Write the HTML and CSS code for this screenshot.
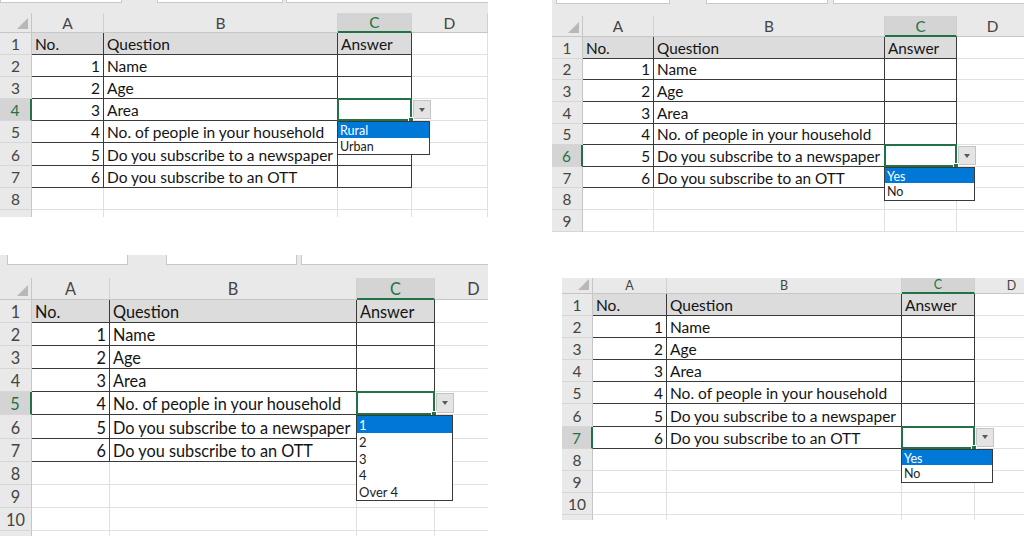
FILE: index.html
```html
<!DOCTYPE html>
<html lang="en">
<head>
    <meta charset="UTF-8">
    <meta name="viewport" content="width=device-width, initial-scale=1.0">
    <title>Survey sheet with data validation lists</title>
    <link rel="stylesheet" href="styles.css">
</head>
<body>
<div class="page">

    <!-- Area: Rural / Urban -->
    <div class="sheet s1">
        <div class="tabs"><span class="tab"></span><span class="tab"></span><span class="tab"></span></div>
        <div class="grid">
            <div class="row"><span class="corner"></span><span class="ch">A</span><span class="ch">B</span><span class="ch on">C</span><span class="ch">D</span></div>
            <div class="row"><span class="rh">1</span><span class="cell t hd">No.</span><span class="cell t hd">Question</span><span class="cell t hd">Answer</span><span class="cell"></span></div>
            <div class="row"><span class="rh">2</span><span class="cell t num">1</span><span class="cell t">Name</span><span class="cell t"></span><span class="cell"></span></div>
            <div class="row"><span class="rh">3</span><span class="cell t num">2</span><span class="cell t">Age</span><span class="cell t"></span><span class="cell"></span></div>
            <div class="row"><span class="rh on">4</span><span class="cell t num">3</span><span class="cell t">Area</span><span class="cell t sel"><span class="arrow"></span><ul class="drop"><li class="hi">Rural</li><li>Urban</li></ul></span><span class="cell"></span></div>
            <div class="row"><span class="rh">5</span><span class="cell t num">4</span><span class="cell t">No. of people in your household</span><span class="cell t"></span><span class="cell"></span></div>
            <div class="row"><span class="rh">6</span><span class="cell t num">5</span><span class="cell t">Do you subscribe to a newspaper</span><span class="cell t"></span><span class="cell"></span></div>
            <div class="row"><span class="rh">7</span><span class="cell t num">6</span><span class="cell t">Do you subscribe to an OTT</span><span class="cell t"></span><span class="cell"></span></div>
            <div class="row"><span class="rh">8</span><span class="cell"></span><span class="cell"></span><span class="cell"></span><span class="cell"></span></div>
            <div class="row"><span class="rh"></span><span class="cell"></span><span class="cell"></span><span class="cell"></span><span class="cell"></span></div>
        </div>
    </div>

    <!-- Newspaper: Yes / No -->
    <div class="sheet s2">
        <div class="tabs"><span class="tab"></span><span class="tab"></span><span class="tab"></span></div>
        <div class="grid">
            <div class="row"><span class="corner"></span><span class="ch">A</span><span class="ch">B</span><span class="ch on">C</span><span class="ch">D</span></div>
            <div class="row"><span class="rh">1</span><span class="cell t hd">No.</span><span class="cell t hd">Question</span><span class="cell t hd">Answer</span><span class="cell"></span></div>
            <div class="row"><span class="rh">2</span><span class="cell t num">1</span><span class="cell t">Name</span><span class="cell t"></span><span class="cell"></span></div>
            <div class="row"><span class="rh">3</span><span class="cell t num">2</span><span class="cell t">Age</span><span class="cell t"></span><span class="cell"></span></div>
            <div class="row"><span class="rh">4</span><span class="cell t num">3</span><span class="cell t">Area</span><span class="cell t"></span><span class="cell"></span></div>
            <div class="row"><span class="rh">5</span><span class="cell t num">4</span><span class="cell t">No. of people in your household</span><span class="cell t"></span><span class="cell"></span></div>
            <div class="row"><span class="rh on">6</span><span class="cell t num">5</span><span class="cell t">Do you subscribe to a newspaper</span><span class="cell t sel"><span class="arrow"></span><ul class="drop"><li class="hi">Yes</li><li>No</li></ul></span><span class="cell"></span></div>
            <div class="row"><span class="rh">7</span><span class="cell t num">6</span><span class="cell t">Do you subscribe to an OTT</span><span class="cell t"></span><span class="cell"></span></div>
            <div class="row"><span class="rh">8</span><span class="cell"></span><span class="cell"></span><span class="cell"></span><span class="cell"></span></div>
            <div class="row"><span class="rh">9</span><span class="cell"></span><span class="cell"></span><span class="cell"></span><span class="cell"></span></div>
        </div>
    </div>

    <!-- Household size: 1 .. Over 4 -->
    <div class="sheet s3">
        <div class="tabs"><span class="tab"></span><span class="tab"></span><span class="tab"></span></div>
        <div class="grid">
            <div class="row"><span class="corner"></span><span class="ch">A</span><span class="ch">B</span><span class="ch on">C</span><span class="ch">D</span></div>
            <div class="row"><span class="rh">1</span><span class="cell t hd">No.</span><span class="cell t hd">Question</span><span class="cell t hd">Answer</span><span class="cell"></span></div>
            <div class="row"><span class="rh">2</span><span class="cell t num">1</span><span class="cell t">Name</span><span class="cell t"></span><span class="cell"></span></div>
            <div class="row"><span class="rh">3</span><span class="cell t num">2</span><span class="cell t">Age</span><span class="cell t"></span><span class="cell"></span></div>
            <div class="row"><span class="rh">4</span><span class="cell t num">3</span><span class="cell t">Area</span><span class="cell t"></span><span class="cell"></span></div>
            <div class="row"><span class="rh on">5</span><span class="cell t num">4</span><span class="cell t">No. of people in your household</span><span class="cell t sel"><span class="arrow"></span><ul class="drop"><li class="hi">1</li><li>2</li><li>3</li><li>4</li><li>Over 4</li></ul></span><span class="cell"></span></div>
            <div class="row"><span class="rh">6</span><span class="cell t num">5</span><span class="cell t">Do you subscribe to a newspaper</span><span class="cell t"></span><span class="cell"></span></div>
            <div class="row"><span class="rh">7</span><span class="cell t num">6</span><span class="cell t">Do you subscribe to an OTT</span><span class="cell t"></span><span class="cell"></span></div>
            <div class="row"><span class="rh">8</span><span class="cell"></span><span class="cell"></span><span class="cell"></span><span class="cell"></span></div>
            <div class="row"><span class="rh">9</span><span class="cell"></span><span class="cell"></span><span class="cell"></span><span class="cell"></span></div>
            <div class="row"><span class="rh">10</span><span class="cell"></span><span class="cell"></span><span class="cell"></span><span class="cell"></span></div>
            <div class="row"><span class="rh"></span><span class="cell"></span><span class="cell"></span><span class="cell"></span><span class="cell"></span></div>
        </div>
    </div>

    <!-- OTT: Yes / No -->
    <div class="sheet s4">
        <div class="grid">
            <div class="row"><span class="corner"></span><span class="ch">A</span><span class="ch">B</span><span class="ch on">C</span><span class="ch">D</span></div>
            <div class="row"><span class="rh">1</span><span class="cell t hd">No.</span><span class="cell t hd">Question</span><span class="cell t hd">Answer</span><span class="cell"></span></div>
            <div class="row"><span class="rh">2</span><span class="cell t num">1</span><span class="cell t">Name</span><span class="cell t"></span><span class="cell"></span></div>
            <div class="row"><span class="rh">3</span><span class="cell t num">2</span><span class="cell t">Age</span><span class="cell t"></span><span class="cell"></span></div>
            <div class="row"><span class="rh">4</span><span class="cell t num">3</span><span class="cell t">Area</span><span class="cell t"></span><span class="cell"></span></div>
            <div class="row"><span class="rh">5</span><span class="cell t num">4</span><span class="cell t">No. of people in your household</span><span class="cell t"></span><span class="cell"></span></div>
            <div class="row"><span class="rh">6</span><span class="cell t num">5</span><span class="cell t">Do you subscribe to a newspaper</span><span class="cell t"></span><span class="cell"></span></div>
            <div class="row"><span class="rh on">7</span><span class="cell t num">6</span><span class="cell t">Do you subscribe to an OTT</span><span class="cell t sel"><span class="arrow"></span><ul class="drop"><li class="hi">Yes</li><li>No</li></ul></span><span class="cell"></span></div>
            <div class="row"><span class="rh">8</span><span class="cell"></span><span class="cell"></span><span class="cell"></span><span class="cell"></span></div>
            <div class="row"><span class="rh">9</span><span class="cell"></span><span class="cell"></span><span class="cell"></span><span class="cell"></span></div>
            <div class="row"><span class="rh">10</span><span class="cell"></span><span class="cell"></span><span class="cell"></span><span class="cell"></span></div>
            <div class="row"><span class="rh"></span><span class="cell"></span><span class="cell"></span><span class="cell"></span><span class="cell"></span></div>
        </div>
    </div>

</div>
</body>
</html>
```

FILE: styles.css
```css
/* page */
body {
    margin: 0;
    background: #fff;
    font-family: Lato, "Liberation Sans", sans-serif;
    color: #141414;
}

.page {
    position: relative;
    width: 1024px;
    height: 536px;
    overflow: hidden;
}

/* one screenshot of the sheet */
.sheet {
    position: absolute;
    overflow: hidden;
    background: #fff;
    font-size: 15.5px;
    --ih: 15.5px;
}

.tabs {
    display: flex;
    align-items: flex-start;
    height: var(--th);
    background: #e9e9e9;
}
.tab {
    box-sizing: border-box;
    height: var(--tabh);
    background: #fff;
    border: 1px solid #c8c8c8;
    border-top: 0;
}
.tab:last-child {
    flex: 1;
    border-right: 0;
}

.grid {
    display: grid;
    grid-template-columns: var(--cols);
    grid-template-rows: var(--hh);
    grid-auto-rows: var(--rh);
}
.row {
    display: contents;
}
.corner, .ch, .rh, .cell {
    box-sizing: border-box;
    display: flex;
    align-items: center;
    white-space: nowrap;
}

/* headers */
.corner {
    position: relative;
    background: #e9e9e9;
    border-right: 1px solid #c6c6c6;
    border-bottom: 1px solid #c6c6c6;
}
.corner::after {
    content: "";
    position: absolute;
    right: 3px;
    bottom: 3px;
    border-left: 11px solid transparent;
    border-bottom: 11px solid #b8b8b8;
}
.ch {
    justify-content: center;
    background: #e9e9e9;
    color: #444;
    border-right: 1px solid #d0d0d0;
    border-bottom: 1px solid #c6c6c6;
}
.ch.on {
    background: #d4d4d4;
    color: #217346;
    border-bottom: 2px solid #217346;
}
.rh {
    justify-content: center;
    padding-top: 1px;
    background: #e9e9e9;
    color: #444;
    border-right: 1px solid #c6c6c6;
    border-bottom: 1px solid #d6d6d6;
}
.rh.on {
    background: #d4d4d4;
    color: #217346;
    border-right: 2px solid #217346;
}

/* cells */
.cell {
    padding: 1px 3px 0;
    border-right: 1px solid #e0e0e0;
    border-bottom: 1px solid #e0e0e0;
}
.cell.t {
    border-color: #3a3a3a;
}
.cell.hd {
    background: #dcdcdc;
}
.cell.num {
    justify-content: flex-end;
}

/* active cell with its list */
.sel {
    position: relative;
    z-index: 2;
}
.sel::before {
    content: "";
    position: absolute;
    left: -1px;
    top: -1px;
    right: -1px;
    bottom: -1px;
    border: 2px solid #217346;
}
.sel::after {
    content: "";
    position: absolute;
    right: -3px;
    bottom: -3px;
    width: 4px;
    height: 4px;
    background: #217346;
    border: 1px solid #fff;
}
.arrow {
    position: absolute;
    left: calc(100% + 2px);
    top: 1px;
    box-sizing: border-box;
    width: 18px;
    height: calc(100% - 2px);
    background: #e4e4e4;
    border: 1px solid #c4c4c4;
}
.arrow::after {
    content: "";
    position: absolute;
    left: 5px;
    top: 50%;
    margin-top: -2px;
    border-left: 3.5px solid transparent;
    border-right: 3.5px solid transparent;
    border-top: 4px solid #5a5a5a;
}
.drop {
    position: absolute;
    left: -1px;
    top: calc(100% + 1px);
    box-sizing: border-box;
    width: calc(100% + 20px);
    margin: 0;
    padding: 0 0 1px;
    list-style: none;
    background: #fff;
    border: 1px solid #3a3a3a;
    font-size: 12.5px;
    z-index: 3;
}
.drop li {
    box-sizing: border-box;
    height: var(--ih);
    line-height: var(--ih);
    padding: 1px 0 0 2px;
    color: #222;
}
.drop li.hi {
    background: #0078d7;
    color: #fff;
}

/* the four screenshots */
.s1 {
    left: 0;
    top: 0;
    width: 488px;
    height: 217px;
    --th: 13px;
    --tabh: 3px;
    --hh: 20px;
    --rh: 22.1px;
    --cols: 32px 72px 234px 74px 76px;
}
.s1 .tab:nth-child(1) { width: 122px; }
.s1 .tab:nth-child(2) { width: 126px; margin-left: 35px; }
.s1 .tab:nth-child(3) { margin-left: 3px; }

.s2 {
    left: 552px;
    top: 0;
    width: 472px;
    height: 232px;
    font-size: 15.3px;
    --th: 16px;
    --tabh: 4px;
    --hh: 21px;
    --rh: 21.65px;
    --cols: 31px 71px 231px 72px 72px;
}
.s2 .tab:nth-child(1) { width: 114px; margin-left: 4px; }
.s2 .tab:nth-child(2) { width: 122px; margin-left: 36px; }
.s2 .tab:nth-child(3) { margin-left: 5px; }

.s3 {
    left: 0;
    top: 255px;
    width: 488px;
    height: 281px;
    font-size: 16.3px;
    --ih: 16.6px;
    --th: 23px;
    --tabh: 10px;
    --hh: 22px;
    --rh: 23.1px;
    --cols: 32px 78px 247px 78px 78px;
}
.s3 .drop { font-size: 13px; }
.s3 .tab:nth-child(1) { width: 121px; margin-left: 7px; }
.s3 .tab:nth-child(2) { width: 131px; margin-left: 38px; }
.s3 .tab:nth-child(3) { margin-left: 4px; }

.s4 {
    left: 562px;
    top: 278px;
    width: 462px;
    height: 242px;
    --hh: 16px;
    --rh: 22.1px;
    --cols: 31px 74px 235px 73px 74px;
}
.s4 .ch {
    font-size: 12.5px;
    line-height: 12px;
}
```
